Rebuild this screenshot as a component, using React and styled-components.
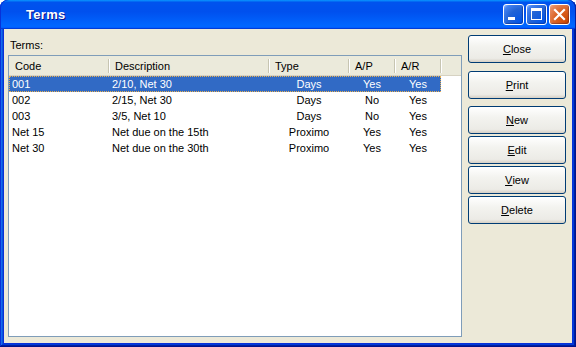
import React from "react";
import styled, { createGlobalStyle } from "styled-components";

const Global = createGlobalStyle`
  html, body { margin: 0; padding: 0; background: #ffffff; }
  body { font-family: "Liberation Sans", Arial, sans-serif; font-size: 11px; }
`;

const Window = styled.div`
  width: 576px;
  height: 347px;
  display: flex;
  flex-direction: column;
  background: #0831d9;
  border-radius: 8px 8px 0 0;
  box-shadow: inset -1px -1px #00138c, inset 1px 1px #0831d9,
    inset -2px -2px #001ea0, inset 2px 2px #166aee,
    inset -3px -3px #003bda, inset 3px 3px #0855dd;
  overflow: hidden;
`;

const TitleBar = styled.div`
  height: 29px;
  flex: none;
  display: flex;
  align-items: center;
  padding: 0 6px 0 26px;
  border-radius: 8px 8px 0 0;
  background: linear-gradient(
    180deg,
    #0997ff,
    #0053ee 8%,
    #0050ee 40%,
    #06f 88%,
    #06f 93%,
    #005bff 95%,
    #003dd7 96%,
    #003dd7
  );
  box-shadow: inset 1px 0 #0831d9, inset -1px 0 #001ea0;
`;

const Title = styled.div`
  flex: 1;
  color: #fff;
  font-family: "Liberation Sans", Arial, sans-serif;
  font-weight: bold;
  font-size: 13px;
  letter-spacing: 0.3px;
  text-shadow: 1px 1px #0f1089;
  padding-bottom: 1px;
`;

const Controls = styled.div`
  display: flex;
  gap: 2px;
  padding-bottom: 1px;
`;

const CtrlButton = styled.div`
  width: 21px;
  height: 21px;
  box-sizing: border-box;
  border: 1px solid #fff;
  border-radius: 3px;
  position: relative;
  background: ${(p) =>
    p.$close
      ? "radial-gradient(circle at 90% 90%, #cc4600 0%, #dc6527 55%, #e78a5e 85%, #f0b090 100%)"
      : "radial-gradient(circle at 90% 90%, #0054e9 0%, #2263d5 55%, #4482f0 85%, #a6c6ff 100%)"};
  box-shadow: inset -1px -1px 1px rgba(0, 0, 60, 0.3);
`;

const Glyph = styled.svg`
  position: absolute;
  left: 0;
  top: 0;
`;

const Body = styled.div`
  flex: 1;
  margin: 0 4px 4px 4px;
  background: #ece9d8;
  display: flex;
  gap: 6px;
  padding: 0 6px 6px 4px;
  min-height: 0;
`;

const LeftCol = styled.div`
  flex: 1;
  display: flex;
  flex-direction: column;
  padding-top: 9px;
  min-width: 0;
`;

const Label = styled.div`
  line-height: 14px;
  height: 14px;
  padding-left: 2px;
  color: #000;
`;

const ListBox = styled.div`
  flex: 1;
  margin-top: 3px;
  border: 1px solid #7f9db9;
  background: #fff;
`;

const HeaderRow = styled.div`
  display: flex;
  height: 17px;
  background: #ebeadb;
  border-bottom: 1px solid #d6d2c2;
  padding-top: 2px;
`;

const HeadCell = styled.div`
  position: relative;
  width: ${(p) => p.$w}px;
  flex: none;
  box-sizing: border-box;
  padding-left: 6px;
  line-height: 17px;
  color: #000;
  &::after {
    content: "";
    position: absolute;
    right: 0;
    top: 1px;
    bottom: 2px;
    width: 1px;
    background: #c7c5b2;
    box-shadow: 1px 0 #fff;
  }
`;

const HeadFill = styled.div`
  flex: 1;
`;

const Row = styled.div`
  display: flex;
  width: 432px;
  height: 16px;
  box-sizing: border-box;
  background: ${(p) => (p.$sel ? "#316ac5" : "transparent")};
  color: ${(p) => (p.$sel ? "#fff" : "#000")};
  outline: ${(p) => (p.$sel ? "1px dotted #e8b050" : "none")};
  outline-offset: -1px;
`;

const Cell = styled.div`
  width: ${(p) => p.$w}px;
  flex: none;
  box-sizing: border-box;
  padding-left: ${(p) => (p.$center ? 0 : 3)}px;
  text-align: ${(p) => (p.$center ? "center" : "left")};
  line-height: 16px;
  white-space: nowrap;
  overflow: hidden;
`;

const RightCol = styled.div`
  width: 98px;
  flex: none;
  display: flex;
  flex-direction: column;
  padding-top: 6px;
`;

const Button = styled.div`
  height: 28px;
  box-sizing: border-box;
  margin-top: ${(p) => p.$gap}px;
  border: 1px solid #003c74;
  border-radius: 3px;
  background: linear-gradient(180deg, #ffffff, #f3f3ef 40%, #ecebe6 86%, #d6d0c5);
  display: flex;
  align-items: center;
  justify-content: center;
  color: #000;
  font-size: 11px;
`;

const Accel = styled.span`
  text-decoration: underline;
`;

const COLS = [100, 160, 80, 46, 46];

const rows = [
  ["001", "2/10, Net 30", "Days", "Yes", "Yes"],
  ["002", "2/15, Net 30", "Days", "No", "Yes"],
  ["003", "3/5, Net 10", "Days", "No", "Yes"],
  ["Net 15", "Net due on the 15th", "Proximo", "Yes", "Yes"],
  ["Net 30", "Net due on the 30th", "Proximo", "Yes", "Yes"],
];

const buttons = [
  ["Close", 0],
  ["Print", 8],
  ["New", 7],
  ["Edit", 2],
  ["View", 2],
  ["Delete", 2],
];

export default function App() {
  return (
    <>
      <Global />
      <Window>
        <TitleBar>
          <Title>Terms</Title>
          <Controls>
            <CtrlButton>
              <Glyph width="19" height="19" viewBox="0 0 19 19">
                <rect x="4" y="12" width="7" height="3" fill="#fff" />
              </Glyph>
            </CtrlButton>
            <CtrlButton>
              <Glyph width="19" height="19" viewBox="0 0 19 19">
                <rect x="4" y="3" width="11" height="3" fill="#fff" />
                <rect x="4.5" y="3.5" width="10" height="11" fill="none" stroke="#fff" strokeWidth="1" />
              </Glyph>
            </CtrlButton>
            <CtrlButton $close>
              <Glyph width="19" height="19" viewBox="0 0 19 19">
                <path d="M5 5 L14 14 M14 5 L5 14" stroke="#fff" strokeWidth="2.2" strokeLinecap="square" />
              </Glyph>
            </CtrlButton>
          </Controls>
        </TitleBar>
        <Body>
          <LeftCol>
            <Label>Terms:</Label>
            <ListBox>
              <HeaderRow>
                <HeadCell $w={COLS[0]}>Code</HeadCell>
                <HeadCell $w={COLS[1]}>Description</HeadCell>
                <HeadCell $w={COLS[2]}>Type</HeadCell>
                <HeadCell $w={COLS[3]}>A/P</HeadCell>
                <HeadCell $w={COLS[4]}>A/R</HeadCell>
                <HeadFill />
              </HeaderRow>
              {rows.map((r, i) => (
                <Row key={r[0]} $sel={i === 0}>
                  <Cell $w={COLS[0]}>{r[0]}</Cell>
                  <Cell $w={COLS[1]}>{r[1]}</Cell>
                  <Cell $w={COLS[2]} $center>{r[2]}</Cell>
                  <Cell $w={COLS[3]} $center>{r[3]}</Cell>
                  <Cell $w={COLS[4]} $center>{r[4]}</Cell>
                </Row>
              ))}
            </ListBox>
          </LeftCol>
          <RightCol>
            {buttons.map(([label, gap]) => (
              <Button key={label} $gap={gap}>
                <Accel>{label[0]}</Accel>
                {label.slice(1)}
              </Button>
            ))}
          </RightCol>
        </Body>
      </Window>
    </>
  );
}
